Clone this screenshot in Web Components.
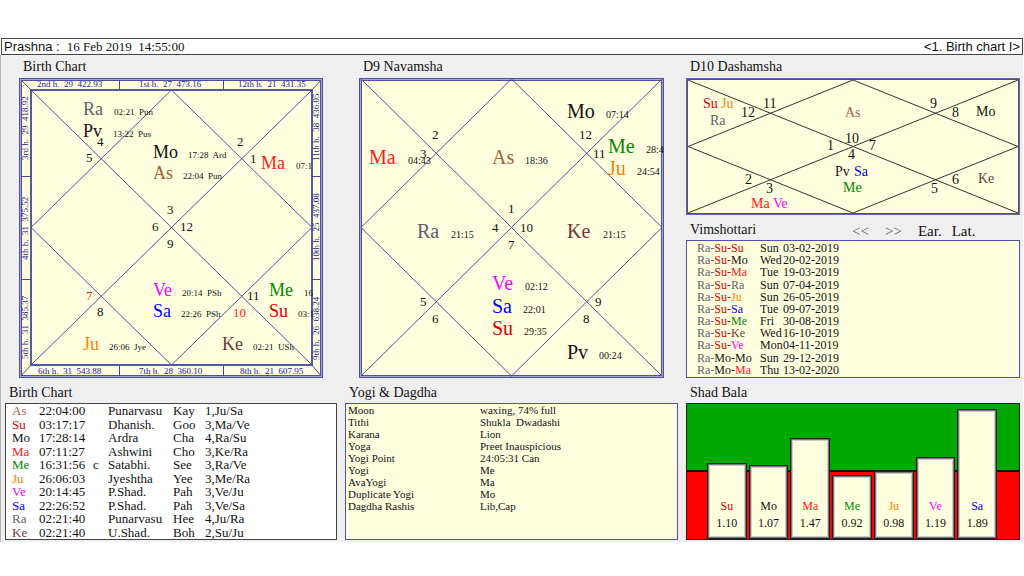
<!DOCTYPE html>
<html lang="en">
<head>
<meta charset="utf-8">
<title>Prashna</title>
<style>
  body {
    margin: 38px 0 0;
    background: #fff;
    color: #111;
    font-family: "Liberation Serif", serif;
  }

  main {
    display: grid;
    grid-template-columns: 332fr 333fr 334fr;
    gap: 8px;
    margin-right: 1px;
    padding: 0 3px 2px 4px;
    border-left: 1px solid #b4b4b4;
    background: #efefef;
  }
</style>
</head>
<body>
<title-bar page="&lt;1. Birth chart I&gt;">16 Feb 2019  14:55:00</title-bar>
<main>
  <div>
    <chart-panel heading="Birth Chart" inset><kundli-chart kind="birth"></kundli-chart></chart-panel>
    <chart-panel heading="Birth Chart" lower><planet-table></planet-table></chart-panel>
  </div>
  <div>
    <chart-panel heading="D9 Navamsha" inset><kundli-chart kind="navamsha"></kundli-chart></chart-panel>
    <chart-panel heading="Yogi &amp; Dagdha" lower><yogi-table></yogi-table></chart-panel>
  </div>
  <div>
    <chart-panel heading="D10 Dashamsha"><kundli-chart kind="dashamsha"></kundli-chart></chart-panel>
    <chart-panel heading="Vimshottari" lower>
      <dasha-nav slot="tools"></dasha-nav>
      <dasha-table></dasha-table>
    </chart-panel>
    <chart-panel heading="Shad Bala" lower><shad-bala></shad-bala></chart-panel>
  </div>
</main>

<script>
const COLORS = {
  As: '#a0603a', Su: '#d40000', Mo: '#111111', Ma: '#ff1a1a', Me: '#008a00', Ju: '#ff8000',
  Ve: '#ff00ff', Sa: '#0000ff', Ra: '#606070', Ke: '#703838', Pv: '#201010'
};

const paint = (name, text = name) => `<span style="color:${COLORS[name]}">${text}</span>`;

// planets: [name, x, y, degrees, degrees x]; signs: [number, x, y, afflicted]
const CHARTS = {
  birth: {
    width: 304, height: 300, box: [12, 12, 293, 287], line: '#5050a8', name: 18, degree: 9, sign: 13,
    planets: [
      ['Ra', 64, 37, '02:21  Pun', 95], ['Pv', 64, 59, '13:22  Pus', 94],
      ['Mo', 134, 80, '17:28  Ard', 169], ['As', 134, 101, '22:04  Pun', 164],
      ['Ma', 242, 91, '07:1', 277], ['Ve', 134, 218, '20:14  PSh', 163],
      ['Sa', 134, 239, '22:26  PSh', 162], ['Me', 250, 218, '16', 285],
      ['Su', 250, 239, '03:1', 279], ['Ju', 64, 272, '26:06  Jye', 90],
      ['Ke', 203, 272, '02:21  USh', 234]
    ],
    signs: [
      [4, 78, 68], [5, 67, 84], [2, 218, 68], [1, 231, 85], [3, 148, 136], [6, 133, 153], [12, 161, 153],
      [9, 148, 170], [7, 67, 222, true], [8, 78, 238], [11, 228, 222], [10, 214, 239, true]
    ],
    // [text, x, y, upright]
    houses: [
      ['2nd h.  29  422.93', 18, 9, true], ['1st h.  27  473.16', 120, 9, true], ['12th h.  21  431.35', 219, 9, true],
      ['6th h.  31  543.88', 19, 296, true], ['7th h.  28  360.10', 120, 296, true], ['8th h.  21  607.95', 221, 296, true],
      ['3rd h.  29  418.92', 9, 82], ['4th h.  31  375.52', 9, 182], ['5th h.  31  385.37', 9, 281],
      ['11th h.  38  436.05', 300, 83], ['10th h.  25  437.08', 300, 183], ['9th h.  26  638.24', 300, 282]
    ]
  },
  navamsha: {
    width: 305, height: 300, box: [2, 1, 303, 298], line: '#5050a8', name: 20, degree: 10, sign: 13,
    planets: [
      ['Mo', 208, 40, '07:14', 247], ['Ma', 10, 86, '04:43', 49], ['As', 133, 86, '18:36', 166],
      ['Me', 249, 75, '28:4', 287], ['Ju', 249, 97, '24:54', 278], ['Ra', 58, 160, '21:15', 92],
      ['Ke', 208, 160, '21:15', 244], ['Ve', 133, 212, '02:12', 166], ['Sa', 133, 235, '22:01', 164],
      ['Su', 133, 257, '29:35', 165], ['Pv', 208, 281, '00:24', 240]
    ],
    signs: [
      [2, 73, 61], [3, 61, 80], [12, 220, 61], [11, 234, 80], [1, 149, 135], [4, 133, 154], [10, 161, 154],
      [7, 149, 171], [5, 61, 228], [6, 73, 245], [9, 236, 228], [8, 224, 245]
    ]
  },
  dashamsha: {
    width: 334, height: 137, box: [2, 2, 332, 135], line: '#333', name: 14, sign: 14,
    planets: [
      ['Su', 17, 30], ['Ju', 35, 30], ['Ra', 24, 47], ['As', 159, 39], ['Mo', 290, 38], ['Pv', 149, 98],
      ['Sa', 168, 98], ['Me', 157, 114], ['Ke', 292, 105], ['Ma', 65, 130], ['Ve', 87, 130]
    ],
    signs: [
      [12, 55, 39], [11, 77, 30], [9, 244, 30], [8, 266, 39], [10, 159, 65], [1, 141, 72], [7, 183, 72],
      [4, 162, 81], [2, 59, 106], [3, 80, 115], [5, 245, 115], [6, 266, 106]
    ]
  }
};

class TitleBar extends HTMLElement {
  constructor() {
    super();
    this.attachShadow({ mode: 'open' });
    this.shadowRoot.innerHTML = `
      <style>
        :host {
          display: flex;
          align-items: baseline;
          margin: 0 1px;
          padding: 0 2px;
          border: 1px solid #444;
          background: #fff;
          font: 13px/15px "Liberation Serif", serif;
          white-space: pre;
        }
        .name, .page { font-family: "Liberation Sans", sans-serif; }
        .name { margin-right: 7px; }
        .page { margin-left: auto; }
      </style>
      <span class="name">Prashna :</span>
      <slot></slot>
      <span class="page"></span>
    `.replace(/>\s+</g, '><');
  }

  connectedCallback() {
    this.shadowRoot.querySelector('.page').textContent = this.getAttribute('page');
  }
}

class ChartPanel extends HTMLElement {
  constructor() {
    super();
    this.attachShadow({ mode: 'open' });
    this.shadowRoot.innerHTML = `
      <style>
        :host { display: block; }
        :host([inset]) { padding: 0 14px; }
        header {
          display: flex;
          align-items: center;
          height: 23px;
          padding-left: 4px;
        }
        :host([lower]) header { height: 21px; padding-top: 4px; }
        h2 { margin: 0; font-size: 14px; font-weight: normal; line-height: 16px; white-space: nowrap; }
        slot[name=tools] { display: block; flex: 1; }
      </style>
      <header><h2></h2><slot name="tools"></slot></header>
      <slot></slot>
    `;
  }

  connectedCallback() {
    this.shadowRoot.querySelector('h2').textContent = this.getAttribute('heading');
  }
}

class KundliChart extends HTMLElement {
  constructor() {
    super();
    this.attachShadow({ mode: 'open' });
  }

  connectedCallback() {
    const chart = CHARTS[this.getAttribute('kind')];
    this.shadowRoot.innerHTML = `
      <style>
        :host { display: block; }
        svg { display: block; width: 100%; height: auto; background: #ffffe0; }
        text { white-space: pre; fill: #111; }
        path, rect { fill: none; }
        .name { font-size: ${chart.name}px; }
        .degree { font-size: ${chart.degree}px; }
        .sign { font-size: ${chart.sign}px; }
        .sign.bad { fill: #ff1a1a; }
        .house { font-size: 9px; fill: #202090; }
      </style>
      <svg viewBox="0 0 ${chart.width} ${chart.height}" role="img">
        ${this.frame(chart)}
        ${this.diamonds(chart)}
        ${chart.signs.map(([n, x, y, bad]) => `<text class="sign${bad ? ' bad' : ''}" x="${x}" y="${y}">${n}</text>`).join('')}
        ${chart.planets.map(p => this.planet(p)).join('')}
        ${(chart.houses || []).map(h => this.house(h)).join('')}
      </svg>
    `;
  }

  frame({ width: w, height: h, box: [l, t, r, b], houses, degree }) {
    if (!degree) {
      return `<rect x=".5" y=".5" width="${w - 1}" height="${h - 1}" stroke="#6464b4"/>
        <rect x="1.5" y="1.5" width="${w - 3}" height="${h - 3}" stroke="#555"/>`;
    }
    let out = `<rect x="1.5" y="1.5" width="${w - 3}" height="${h - 3}" stroke="#5050a0" stroke-width="3"/>
      <rect x="1.5" y="1.5" width="${w - 3}" height="${h - 3}" stroke="#a4a4d4"/>`;
    if (houses) {
      out += `<rect x="${l}" y="${t}" width="${r - l}" height="${b - t}" stroke="#5858a8" stroke-width="2"/>
        <path stroke="#4848a0" d="M2 2L${l} ${t}M${w - 2} 2L${r} ${t}M2 ${h - 2}L${l} ${b}M${w - 2} ${h - 2}L${r} ${b}
          M100.5 2V${t}M204.5 2V${t}M100.5 ${b}V${h - 2}M204.5 ${b}V${h - 2}
          M2 98.5H${l}M2 201.5H${l}M${r} 98.5H${w - 2}M${r} 201.5H${w - 2}"/>`;
    }
    return out;
  }

  diamonds({ box: [l, t, r, b], line }) {
    const x = (l + r) / 2;
    const y = (t + b) / 2;
    return `<path stroke="${line}" d="M${l} ${t}L${r} ${b}M${r} ${t}L${l} ${b}M${x} ${t}L${r} ${y}L${x} ${b}L${l} ${y}Z"/>`;
  }

  planet([name, x, y, degrees, dx]) {
    return `<text class="name" x="${x}" y="${y}" style="fill:${COLORS[name]}">${name}</text>` +
      (degrees ? `<text class="degree" x="${dx}" y="${y}">${degrees}</text>` : '');
  }

  house([text, x, y, upright]) {
    const turn = upright ? '' : ` transform="rotate(-90 ${x} ${y})"`;
    return `<text class="house" x="${x}" y="${y}"${turn}>${text}</text>`;
  }
}

// shared look of the framed tables
const tableStyle = `
  :host { display: block; height: 136px; border: 1px solid #5050a8; background: #ffffe0; overflow: hidden; }
  table { border-collapse: collapse; table-layout: fixed; width: 100%; }
  td { padding: 0; white-space: pre; }
`;

class PlanetTable extends HTMLElement {
  constructor() {
    super();
    this.attachShadow({ mode: 'open' });
    const rows = [
      ['As', '22:04:00', '', 'Punarvasu', 'Kay', '1,Ju/Sa'],
      ['Su', '03:17:17', '', 'Dhanish.', 'Goo', '3,Ma/Ve'],
      ['Mo', '17:28:14', '', 'Ardra', 'Cha', '4,Ra/Su'],
      ['Ma', '07:11:27', '', 'Ashwini', 'Cho', '3,Ke/Ra'],
      ['Me', '16:31:56', 'c', 'Satabhi.', 'See', '3,Ra/Ve'],
      ['Ju', '26:06:03', '', 'Jyeshtha', 'Yee', '3,Me/Ra'],
      ['Ve', '20:14:45', '', 'P.Shad.', 'Pah', '3,Ve/Ju'],
      ['Sa', '22:26:52', '', 'P.Shad.', 'Pah', '3,Ve/Sa'],
      ['Ra', '02:21:40', '', 'Punarvasu', 'Hee', '4,Ju/Ra'],
      ['Ke', '02:21:40', '', 'U.Shad.', 'Boh', '2,Su/Ju']
    ];
    this.shadowRoot.innerHTML = `
      <style>
        ${tableStyle}
        :host { height: 135px; border-color: #444; background: #fff; }
        table { height: 135px; margin-left: 6px; font-size: 13px; line-height: 13px; }
      </style>
      <table>
        <colgroup><col width="27"><col width="54"><col width="15"><col width="65"><col width="32"><col></colgroup>
        ${rows.map(([name, ...rest]) => `<tr><td>${paint(name)}</td>${rest.map(c => `<td>${c}</td>`).join('')}</tr>`).join('')}
      </table>
    `;
  }
}

class YogiTable extends HTMLElement {
  constructor() {
    super();
    this.attachShadow({ mode: 'open' });
    const rows = [
      ['Moon', 'waxing, 74% full'],
      ['Tithi', 'Shukla  Dwadashi'],
      ['Karana', 'Lion'],
      ['Yoga', 'Preet Inauspicious'],
      ['Yogi Point', '24:05:31 Can'],
      ['Yogi', 'Me'],
      ['AvaYogi', 'Ma'],
      ['Duplicate Yogi', 'Mo'],
      ['Dagdha Rashis', 'Lib,Cap']
    ];
    this.shadowRoot.innerHTML = `
      <style>
        ${tableStyle}
        :host { height: 135px; }
        table { margin-left: 2px; font-size: 11px; line-height: 12px; }
      </style>
      <table>
        <colgroup><col width="132"><col></colgroup>
        ${rows.map(([key, value]) => `<tr><td>${key}</td><td>${value}</td></tr>`).join('')}
      </table>
    `;
  }
}

class DashaNav extends HTMLElement {
  constructor() {
    super();
    this.attachShadow({ mode: 'open' });
    this.shadowRoot.innerHTML = `
      <style>
        :host { display: flex; gap: 10px; padding: 2px 0 0 96px; }
        button {
          padding: 0;
          border: 0;
          background: none;
          color: #111;
          font: 15px/18px "Liberation Serif", serif;
          cursor: pointer;
        }
        .step { color: #555; margin-right: 6px; }
      </style>
      <button class="step">&lt;&lt;</button>
      <button class="step">&gt;&gt;</button>
      <button>Ear.</button>
      <button>Lat.</button>
    `;
  }
}

class DashaTable extends HTMLElement {
  constructor() {
    super();
    this.attachShadow({ mode: 'open' });
    const rows = [
      ['Ra', 'Su', 'Su', 'Sun', '03-02-2019'],
      ['Ra', 'Su', 'Mo', 'Wed', '20-02-2019'],
      ['Ra', 'Su', 'Ma', 'Tue', '19-03-2019'],
      ['Ra', 'Su', 'Ra', 'Sun', '07-04-2019'],
      ['Ra', 'Su', 'Ju', 'Sun', '26-05-2019'],
      ['Ra', 'Su', 'Sa', 'Tue', '09-07-2019'],
      ['Ra', 'Su', 'Me', 'Fri', '30-08-2019'],
      ['Ra', 'Su', 'Ke', 'Wed', '16-10-2019'],
      ['Ra', 'Su', 'Ve', 'Mon', '04-11-2019'],
      ['Ra', 'Mo', 'Mo', 'Sun', '29-12-2019'],
      ['Ra', 'Mo', 'Ma', 'Thu', '13-02-2020']
    ];
    this.shadowRoot.innerHTML = `
      <style>
        ${tableStyle}
        table { height: 134px; margin: 1px 0 0 10px; font-size: 12px; line-height: 12px; }
      </style>
      <table>
        <colgroup><col width="63"><col width="23"><col></colgroup>
        ${rows.map(([a, b, c, day, date]) => `<tr><td>${paint(a, a + '-')}${paint(b, b + '-')}${paint(c)}</td><td>${day}</td><td>${date}</td></tr>`).join('')}
      </table>
    `;
  }
}

class ShadBala extends HTMLElement {
  constructor() {
    super();
    this.attachShadow({ mode: 'open' });
    const bars = [
      ['Su', '1.10', 76], ['Mo', '1.07', 74], ['Ma', '1.47', 101], ['Me', '0.92', 64],
      ['Ju', '0.98', 68], ['Ve', '1.19', 82], ['Sa', '1.89', 130]
    ];
    this.shadowRoot.innerHTML = `
      <style>
        :host {
          display: flex;
          align-items: flex-end;
          gap: 2px;
          height: 135px;
          padding: 0 22px 0 20px;
          border: 1px solid #222;
          background: linear-gradient(#00a800 66px, #111 66px 68px, #f00 68px);
        }
        div {
          box-sizing: border-box;
          flex: 1;
          display: flex;
          flex-direction: column;
          justify-content: flex-end;
          padding-bottom: 6px;
          border: 1px solid #222;
          background: #ffffe0;
          box-shadow: inset 0 0 0 1px #777, inset 0 0 0 2px #ccc;
          font-size: 12px;
          line-height: 17px;
          text-align: center;
        }
      </style>
      ${bars.map(([name, value, height]) => `<div style="height:${height}px">${paint(name)}<span>${value}</span></div>`).join('')}
    `;
  }
}

customElements.define('title-bar', TitleBar);
customElements.define('chart-panel', ChartPanel);
customElements.define('kundli-chart', KundliChart);
customElements.define('planet-table', PlanetTable);
customElements.define('yogi-table', YogiTable);
customElements.define('dasha-nav', DashaNav);
customElements.define('dasha-table', DashaTable);
customElements.define('shad-bala', ShadBala);
</script>
</body>
</html>
